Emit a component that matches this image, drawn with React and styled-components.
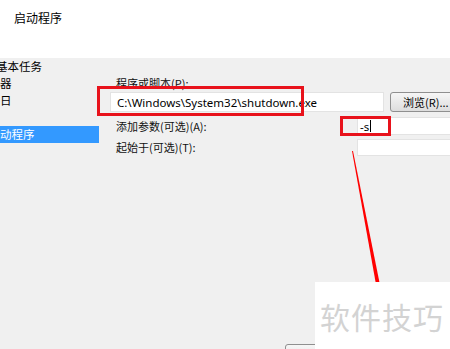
import React from "react";
import styled, { createGlobalStyle } from "styled-components";

const Global = createGlobalStyle`
  html, body { margin: 0; padding: 0; background: #f0f0f0; }
  body { font-family: "Noto Sans", "Noto Sans CJK SC", sans-serif; font-size: 12px; color: #000; }
  * { box-sizing: border-box; }
`;

const Window = styled.div`
  position: relative;
  width: 450px;
  height: 349px;
  overflow: hidden;
  display: flex;
  flex-direction: column;
`;

const Header = styled.div`
  height: 58px;
  flex: none;
  background: #fff;
  padding: 10px 0 0 14px;
`;

const Title = styled.div`
  font-family: "Noto Sans CJK SC", sans-serif;
  font-size: 12px;
  line-height: 16px;
`;

const Body = styled.div`
  flex: none;
  height: 309px;
  display: flex;
  background: #f0f0f0;
`;

const Nav = styled.div`
  width: 100px;
  flex: none;
  overflow: hidden;
  display: flex;
  flex-direction: column;
`;

const NavItem = styled.div`
  height: 17px;
  line-height: 17px;
  white-space: nowrap;
  overflow: hidden;
  font-family: "Noto Sans CJK SC", sans-serif;
  font-size: 11.5px;
  text-indent: ${(p) => p.$indent}px;
  background: ${(p) => (p.$active ? "#3399ff" : "transparent")};
  color: ${(p) => (p.$active ? "#fff" : "#000")};
  margin-right: ${(p) => (p.$active ? "1px" : "0")};
`;

const Main = styled.div`
  flex: 1;
  min-width: 0;
  display: flex;
  flex-direction: column;
  padding: 18px 0 0 10px;
`;

const Label = styled.div`
  font-family: "Noto Sans CJK SC", sans-serif;
  font-size: 11px;
  line-height: 14px;
  padding-left: 6px;
  white-space: nowrap;
  color: #111;
`;

const PathRow = styled.div`
  display: flex;
  align-items: center;
  gap: 6px;
  margin-top: 2px;
`;

const TextBox = styled.div`
  flex: none;
  width: ${(p) => p.$w}px;
  height: ${(p) => p.$h}px;
  background: #fff;
  border: 1px solid #e3e3e3;
  padding-left: ${(p) => p.$pad}px;
  display: flex;
  align-items: center;
  font-family: "Noto Sans", sans-serif;
  font-size: 11.5px;
  white-space: nowrap;
`;

const Caret = styled.span`
  display: inline-block;
  width: 1px;
  height: 12px;
  background: #000;
  margin-left: 1px;
`;

const Button = styled.div`
  flex: none;
  width: ${(p) => p.$w}px;
  height: ${(p) => p.$h}px;
  border: 1px solid #8f8f8f;
  border-radius: 3px;
  background: linear-gradient(#f6f6f6, #dddddd);
  font-family: "Noto Sans CJK SC", sans-serif;
  font-size: 11px;
  padding-left: 12px;
  display: flex;
  align-items: center;
  white-space: nowrap;
`;

const OptGrid = styled.div`
  display: grid;
  grid-template-columns: 247px 120px;
  grid-auto-rows: 18px;
  row-gap: 3px;
  margin-top: 5px;
  align-items: center;
`;

const Footer = styled.div`
  margin-top: auto;
  padding-left: 175px;
  display: flex;
  gap: 8px;
`;

const RedBox = styled.div`
  position: absolute;
  left: ${(p) => p.$x}px;
  top: ${(p) => p.$y}px;
  width: ${(p) => p.$w}px;
  height: ${(p) => p.$h}px;
  border: 3px solid #e8121b;
  pointer-events: none;
`;

const Arrow = styled.svg`
  position: absolute;
  left: 0;
  top: 0;
  width: 450px;
  height: 349px;
  pointer-events: none;
`;

const Watermark = styled.div`
  position: absolute;
  left: 315px;
  top: 282px;
  width: 135px;
  height: 67px;
  background: #fff;
  display: flex;
  align-items: center;
  padding-left: 5px;
  font-family: "Noto Sans CJK SC", sans-serif;
  font-size: 30px;
  letter-spacing: 1px;
  color: #d3d3d3;
  white-space: nowrap;
`;

const navItems = [
  { text: "创建基本任务", indent: -27 },
  { text: "触发器", indent: -23 },
  { text: "每日", indent: -11.5 },
  { text: "操作", indent: -30 },
  { text: "启动程序", indent: -11.5, active: true },
];

export default function App() {
  return (
    <>
      <Global />
      <Window>
        <Header>
          <Title>启动程序</Title>
        </Header>
        <Body>
          <Nav>
            {navItems.map((n) => (
              <NavItem key={n.text} $indent={n.indent} $active={n.active}>
                {n.text}
              </NavItem>
            ))}
          </Nav>
          <Main>
            <Label>程序或脚本(P):</Label>
            <PathRow>
              <TextBox $w={274} $h={20} $pad={6}>
                C:\Windows\System32\shutdown.exe
              </TextBox>
              <Button $w={75} $h={20}>浏览(R)...</Button>
            </PathRow>
            <OptGrid>
              <Label>添加参数(可选)(A):</Label>
              <TextBox $w={120} $h={18} $pad={2}>
                -s<Caret />
              </TextBox>
              <Label>起始于(可选)(T):</Label>
              <TextBox $w={120} $h={17} $pad={2} />
            </OptGrid>
            <Footer>
              <Button $w={75} $h={23} />
            </Footer>
          </Main>
        </Body>
        <RedBox $x={97} $y={86} $w={207} $h={30} />
        <RedBox $x={340} $y={116} $w={51} $h={20} />
        <Arrow viewBox="0 0 450 349">
          <polygon points="352,151 353,151 381,290 377,290" fill="#ff0000" />
        </Arrow>
        <Watermark>软件技巧</Watermark>
      </Window>
    </>
  );
}
